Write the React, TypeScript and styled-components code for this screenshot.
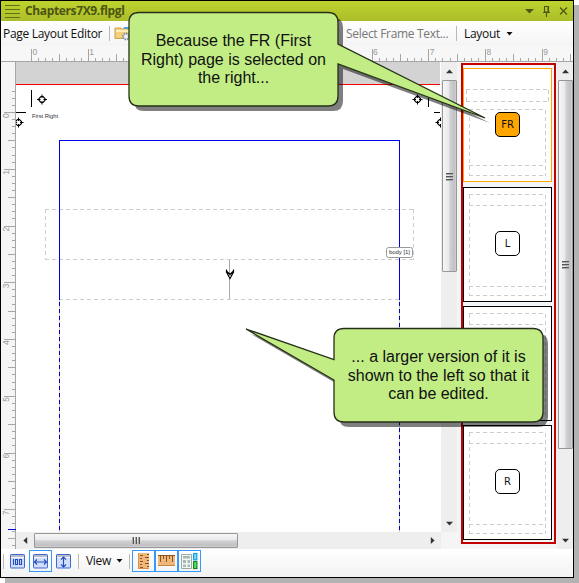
import React from "react";
import styled, { createGlobalStyle, css } from "styled-components";

const GlobalStyle = createGlobalStyle`
  * { box-sizing: border-box; }
  body { margin: 0; background: #fff; overflow: hidden; }
`;

const Stage = styled.div`
  position: relative;
  width: 579px;
  height: 583px;
  background: linear-gradient(#b2b2b2, #b2b2b2) 5px 5px / 574px 578px no-repeat #fff;
  font-family: "Open Sans", "Noto Sans", sans-serif;
`;

const Window = styled.main`
  display: flex;
  flex-direction: column;
  width: 574px;
  height: 578px;
  border: 1px solid #000;
  background: #f5f5f5;
`;

const TitleBar = styled.header`
  display: flex;
  align-items: center;
  height: 20px;
  padding: 0 5px 0 4px;
  background: linear-gradient(#bfd32f, #abbd29);
`;

const Title = styled.h1`
  flex: 1;
  margin: 0 0 0 5px;
  font-size: 12px;
  line-height: 18px;
  font-weight: 700;
  letter-spacing: -0.36px;
  color: #4c5411;
`;

const Toolbar = styled.div`
  display: flex;
  align-items: center;
  height: 25px;
  padding-left: 2px;
  background: linear-gradient(#fff, #f4f4f4);
  white-space: nowrap;
`;

const Label = styled.span<{ $width: number; $muted?: boolean }>`
  width: ${(p) => p.$width}px;
  flex: none;
  font-size: 12px;
  line-height: 16px;
  letter-spacing: -0.3px;
  color: ${(p) => (p.$muted ? "#777" : "#111")};
`;

const Separator = styled.i<{ $left: number; $right: number }>`
  flex: none;
  width: 1px;
  height: 15px;
  margin: 0 ${(p) => p.$right}px 0 ${(p) => p.$left}px;
  background: #b9b9b9;
`;

const Spacer = styled.span<{ $width: number }>`
  flex: none;
  width: ${(p) => p.$width}px;
`;

const Drawing = styled.svg`
  display: block;
  flex: none;
`;

const Body = styled.div`
  display: flex;
  height: 487px;
`;

const Editor = styled.section`
  display: grid;
  grid-template: 470px 17px / 15px 425px 16px;
  width: 456px;
`;

const RulerColumn = styled.div`
  grid-row: 1 / 3;
  background: #f5f5f5;
`;

const Pages = styled.aside`
  display: flex;
  flex-direction: column;
  gap: 4px;
  width: 95px;
  height: 481px;
  margin: 1px 1px 0 4px;
  padding: 3px 2px 0 0;
  border: 2px solid #c40000;
  background: #f2f6f8;
`;

const Page = styled.div<{ $selected?: boolean }>`
  display: grid;
  place-items: center;
  flex: none;
  width: 89px;
  height: ${(p) => (p.$selected ? 114 : 115)}px;
  margin-bottom: ${(p) => (p.$selected ? 1 : 0)}px;
  border: 1px solid ${(p) => (p.$selected ? "#ffa500" : "#000")};
  background: #fff;
  & > * { grid-area: 1 / 1; }
`;

const Badge = styled.span<{ $selected?: boolean }>`
  display: grid;
  place-items: center;
  width: 25px;
  height: 25px;
  margin-bottom: ${(p) => (p.$selected ? 1 : 2)}px;
  border: 1px solid #000;
  border-radius: 5px;
  background: ${(p) => (p.$selected ? "#ffa500" : "#fff")};
  font: 10px "DejaVu Sans", sans-serif;
  color: #111;
`;

const Track = styled.div<{ $vertical?: boolean }>`
  display: flex;
  flex-direction: ${(p) => (p.$vertical ? "column" : "row")};
  align-items: center;
  width: ${(p) => (p.$vertical ? "16px" : "auto")};
  height: ${(p) => (p.$vertical ? "auto" : "17px")};
  background: #eee;
`;

const ArrowCell = styled.span<{ $vertical?: boolean }>`
  display: grid;
  place-items: center;
  flex: none;
  ${(p) => (p.$vertical ? css`width: 16px; height: 18px;` : css`width: 18px; height: 15px;`)}
`;

const Thumb = styled.span<{ $length: number; $vertical?: boolean }>`
  display: grid;
  place-items: center;
  flex: none;
  border: 1px solid #979797;
  border-radius: 1px;
  ${(p) =>
    p.$vertical
      ? css`
          width: 15px;
          height: ${p.$length}px;
          background: linear-gradient(90deg, #f6f6f6, #e9e9eb 46%, #d2d2d5 52%, #c0c0c4 90%, #d8d8da);
        `
      : css`
          height: 15px;
          width: ${p.$length}px;
          background: linear-gradient(#f6f6f6, #e9e9eb 46%, #d2d2d5 52%, #c0c0c4 90%, #d8d8da);
        `}
`;

const Push = styled.span`
  flex: 1;
`;

const StatusBar = styled.footer`
  display: flex;
  align-items: center;
  height: 28px;
  padding: 0 0 4px 2px;
  background: linear-gradient(#fff, #f2f2f2);
`;

const ToolButton = styled.span<{ $active?: boolean }>`
  display: grid;
  place-items: center;
  flex: none;
  width: 23px;
  height: 22px;
  border: 1px solid ${(p) => (p.$active ? "#3399ff" : "transparent")};
`;

const Overlay = styled.svg`
  position: absolute;
  inset: 0;
`;

const Note = styled.p<{ $x: number; $y: number }>`
  position: absolute;
  left: ${(p) => p.$x}px;
  top: ${(p) => p.$y}px;
  width: 209px;
  margin: 0;
  text-align: center;
  white-space: pre-line;
  font: 16px/18.5px "Liberation Sans", Arial, sans-serif;
  color: #111;
`;

const INCH = 56.75;

function HorizontalRuler() {
  const ticks = Array.from({ length: 77 }, (_, i) => i);
  const numbers = [0, 1, 6, 7, 8, 9];
  return (
    <Drawing width="572" height="16" shapeRendering="crispEdges">
      <rect width="572" height="16" fill="#f7f7f7" />
      {ticks.map((i) => {
        const h = i % 8 === 0 ? 12 : i % 4 === 0 ? 7 : 3;
        return <rect key={i} x={Math.round(30 + (i * INCH) / 8)} y={15 - h} width="1" height={h} fill="#a6a6a6" />;
      })}
      <rect y="15" width="572" height="1" fill="#a6a6a6" />
      {numbers.map((n) => (
        <text key={n} x={31.5 + n * INCH} y="9" fontFamily="Liberation Sans" fontSize="8.5" fill="#999">{n}</text>
      ))}
    </Drawing>
  );
}

function VerticalRuler() {
  const ticks = Array.from({ length: 67 }, (_, i) => i - 5);
  return (
    <Drawing width="15" height="487" shapeRendering="crispEdges">
      {ticks.map((i) => {
        const w = i % 8 === 0 ? 11 : i % 4 === 0 ? 7 : 3;
        const y = Math.round(50 + (i * INCH) / 8);
        return y > 22 && y < 487 ? <rect key={i} x={14 - w} y={y} width={w} height="1" fill="#a6a6a6" /> : null;
      })}
      <rect x="14" width="1" height="487" fill="#a6a6a6" />
      <rect x="7" y="467" width="8" height="1" fill="#0000e0" />
      {Array.from({ length: 8 }, (_, n) => (
        <text key={n} transform={`translate(8 ${56 + n * INCH}) rotate(-90)`} fontFamily="Liberation Sans" fontSize="8.5" fill="#999">{n}</text>
      ))}
    </Drawing>
  );
}

function Register({ x, y }: { x: number; y: number }) {
  return (
    <g transform={`translate(${x} ${y})`} fill="none" stroke="#000">
      <path d="M-1 -3H1L3 -1V1L1 3H-1L-3 1V-1Z" strokeWidth="1.1" />
      <path d="M-5 0H-1.5M1.5 0H5M0-5V-1.5M0 1.5V5" />
    </g>
  );
}

/* The editable page: crop marks, margins and text frames. */
function PageCanvas() {
  return (
    <Drawing width="425" height="470" viewBox="16 62 425 470">
      <rect x="16" y="62" width="425" height="470" fill="#fff" />
      <g shapeRendering="crispEdges">
        <rect x="16" y="62" width="424" height="22" fill="#d3d3d3" />
        <rect x="16" y="84" width="424" height="1" fill="#f00" />
        <path d="M31.5 90V107M428.5 90V107M16 112.5H26M434 112.5H440" stroke="#000" />
        <g fill="none" stroke="#cdcdcd">
          <path d="M45.5 209V260M413.5 209V260" strokeDasharray="4 3" />
          <path d="M45 209.5H413M45 259.5H413M59 299.5H399" strokeDasharray="4 3" />
          <path d="M59.5 300V532M399.5 300V532" />
        </g>
        <path d="M59.5 300V141M59 140.5H400M399.5 140V300" fill="none" stroke="#0000f0" />
        <path d="M59.5 302V532M399.5 302V532" stroke="#0000c8" strokeDasharray="4 3" />
        <path d="M229.5 260V299" stroke="#aaa" />
      </g>
      <Register x={42} y={99.5} />
      <Register x={417.5} y={99.5} />
      <Register x={18.5} y={122.5} />
      <Register x={440.5} y={122.5} />
      <path d="M226.5 269.5V272L230 278.5L233.5 272V269.5M227 271.5L230 274.5L233 271.5" fill="none" stroke="#000" strokeWidth="1.2" />
      <path d="M229 275H231V277H229Z" fill="#999" />
      <text x="32" y="118" fontFamily="Liberation Sans" fontSize="5.8" fill="#333" textLength="26">First Right</text>
      <rect x="386.5" y="247.5" width="26" height="10" rx="2" fill="#fff" stroke="#999" />
      <text x="389" y="254.3" fontFamily="Liberation Sans" fontSize="6" fill="#333" textLength="21">body [1]</text>
    </Drawing>
  );
}

function PageThumb({ name, selected }: { name?: string; selected?: boolean }) {
  return (
    <Page $selected={selected}>
      <Drawing width="87" height="112" shapeRendering="crispEdges" fill="none" stroke="#ccc" strokeDasharray="4 3">
        {selected ? (
          <path d="M2 20.5H85M2 32.5H85M2.5 21V32M84.5 21V32M5 40.5H82M5 96.5H82M5 106.5H82M5.5 41V107M81.5 41V107" />
        ) : (
          <path d="M5 5.5H82M5 16.5H82M5 97.5H82M5 106.5H82M5.5 6V107M81.5 6V107" />
        )}
      </Drawing>
      {name && <Badge $selected={selected}>{name}</Badge>}
    </Page>
  );
}

function Arrow({ turn }: { turn: number }) {
  return (
    <Drawing width="7" height="7" viewBox="0 0 7 7">
      <path d="M0 5.2L3.5 1.4L7 5.2Z" fill="#333" transform={`rotate(${turn} 3.5 3.5)`} />
    </Drawing>
  );
}

function Grip({ turn }: { turn: number }) {
  return (
    <Drawing width="9" height="9" viewBox="0 0 9 9" shapeRendering="crispEdges">
      <g transform={`rotate(${turn} 4.5 4.5)`}>
        <path d="M1 1.5H8M1 4.5H8M1 7.5H8" stroke="#555" />
        <path d="M1 2.5H8M1 5.5H8M1 8.5H8" stroke="#aaa" />
      </g>
    </Drawing>
  );
}

function Scroll({ vertical, length }: { vertical?: boolean; length: number }) {
  return (
    <Track $vertical={vertical}>
      <ArrowCell $vertical={vertical}><Arrow turn={vertical ? 0 : -90} /></ArrowCell>
      <Thumb $vertical={vertical} $length={length}><Grip turn={vertical ? 0 : 90} /></Thumb>
      <Push />
      <ArrowCell $vertical={vertical}><Arrow turn={vertical ? 180 : 90} /></ArrowCell>
    </Track>
  );
}

function Caret() {
  return <Drawing width="7" height="4"><path d="M.5 0H6.5L3.5 3.5Z" fill="#111" /></Drawing>;
}

function ZoomIcon({ kind }: { kind: "full" | "width" | "height" }) {
  return (
    <Drawing width="15" height="15" viewBox="0 0 15 15">
      <rect x=".5" y=".5" width="14" height="13.5" rx=".7" fill="#cfdefa" stroke="#3f67cf" />
      <path d="M1 1H14V3H1Z" fill="#b9bdc9" />
      <path d="M1 3.5H14" stroke="#f4f7ff" />
      <g fill="none" stroke="#2448bd" strokeWidth="1.1">
        {kind === "full" && <path d="M3.5 5V11M5.5 5.5H7.5V10.5H5.5ZM9.5 5.5H11.5V10.5H9.5Z" />}
        {kind === "width" && <path d="M1.5 8H13.5M4 5.5L1.5 8L4 10.5M11 5.5L13.5 8L11 10.5" />}
        {kind === "height" && <path d="M7.5 3V13M5 5.5L7.5 3L10 5.5M5 10.5L7.5 13L10 10.5" />}
      </g>
    </Drawing>
  );
}

function RulerIcon({ vertical }: { vertical?: boolean }) {
  return (
    <Drawing width="17" height="16" viewBox="0 0 17 16" shapeRendering="crispEdges">
      {vertical ? (
        <>
          <rect x="3" y="0" width="11" height="16" fill="#f0b77a" />
          <path d="M3 15.5H14M3.5 0V16" stroke="#d3924f" />
          <path d="M5 2.5H8M5 5.5H7M5 8.5H8M5 11.5H7M5 14.5H8M12 1.5H14M10 4.5H14M12 7.5H14M10 10.5H14M12 13.5H14" stroke="#8d531e" />
        </>
      ) : (
        <>
          <rect x="0" y="2" width="17" height="11" fill="#f0b77a" />
          <path d="M0 12.5H17" stroke="#c58442" />
          <path d="M0 2.5H17M2.5 3V9M5.5 3V6M8.5 3V9M11.5 3V6M14.5 3V9" stroke="#8d531e" />
        </>
      )}
    </Drawing>
  );
}

function FramesIcon() {
  return (
    <Drawing width="17" height="17" viewBox="0 0 17 17">
      <path d="M.5 1.5H10.5V15.5H.5Z" fill="#f2f7f5" stroke="#9aaba7" />
      <path d="M2 3H9V5.5H2ZM2 7H5V10H2ZM6.5 7H9V10H6.5ZM2 11.5H5V14H2ZM6.5 11.5H9V14H6.5Z" fill="#a5b8b3" />
      <rect x="12.6" y=".6" width="3.3" height="6.3" fill="#75d5ff" stroke="#0099e0" />
      <rect x="12.6" y="8.6" width="3.3" height="7" fill="#4de05d" stroke="#07771a" />
    </Drawing>
  );
}

function FolderIcon() {
  return (
    <Drawing width="20" height="17" viewBox="0 0 20 17">
      <path d="M1 3.5V13.5H17V2.5H10L8.5 4.5L7 3H1Z" fill="#f5cf79" stroke="#caa04b" />
      <path d="M10 3H16" stroke="#4ba3df" strokeWidth="2" />
      <path d="M2 6H16" stroke="#ffedb9" strokeWidth="2" />
      <circle cx="12" cy="11.5" r="3" fill="#eee" stroke="#8193a2" strokeWidth="2" strokeDasharray="1.5 .8" />
    </Drawing>
  );
}

interface CalloutProps {
  x: number;
  y: number;
  outline: string;
  children: string;
}

function Callout({ x, y, outline, children }: CalloutProps) {
  return (
    <>
      <Overlay width="579" height="583">
        <path d={outline} transform="translate(5 5)" fill="#000" opacity=".5" />
        <path d={outline} fill="#c2ed85" stroke="#263018" strokeWidth="1.3" />
      </Overlay>
      <Note $x={x} $y={y}>{children}</Note>
    </>
  );
}

export default function App() {
  return (
    <Stage>
      <GlobalStyle />
      <Window>
        <TitleBar>
          <Drawing width="15" height="14" shapeRendering="crispEdges">
            <path d="M0 1.5H15M0 5.5H15M0 9.5H15M0 13.5H15" stroke="#646e16" />
          </Drawing>
          <Title>Chapters7X9.flpgl</Title>
          <Drawing width="44" height="12" viewBox="0 0 44 12">
            <path d="M1 4H10L5.5 8.5Z" fill="#4d5613" />
            <path d="M20.5 1.5H24.5V7H20.5ZM19 7.5H26M22.5 7V12M24 1V7" fill="none" stroke="#4d5613" strokeWidth="1.1" />
            <path d="M36 2.5L43 9.5M43 2.5L36 9.5" stroke="#4d5613" strokeWidth="1.3" />
          </Drawing>
        </TitleBar>
        <Toolbar>
          <Label $width={99}>Page Layout Editor</Label>
          <Separator $left={7} $right={4} />
          <FolderIcon />
          <Spacer $width={212} />
          <Label $width={102} $muted>Select Frame Text...</Label>
          <Separator $left={8} $right={7} />
          <Label $width={42}>Layout</Label>
          <Caret />
        </Toolbar>
        <HorizontalRuler />
        <Body>
          <Editor>
            <RulerColumn><VerticalRuler /></RulerColumn>
            <PageCanvas />
            <Scroll vertical length={192} />
            <Scroll length={204} />
          </Editor>
          <Pages>
            <PageThumb name="FR" selected />
            <PageThumb name="L" />
            <PageThumb />
            <PageThumb name="R" />
          </Pages>
          <Scroll vertical length={369} />
        </Body>
        <StatusBar>
          <Separator $left={0} $right={2} />
          <ToolButton><ZoomIcon kind="full" /></ToolButton>
          <ToolButton $active><ZoomIcon kind="width" /></ToolButton>
          <ToolButton><ZoomIcon kind="height" /></ToolButton>
          <Separator $left={3} $right={7} />
          <Label $width={30}>View</Label>
          <Caret />
          <Separator $left={6} $right={2} />
          <ToolButton $active><RulerIcon vertical /></ToolButton>
          <ToolButton $active><RulerIcon /></ToolButton>
          <ToolButton $active><FramesIcon /></ToolButton>
        </StatusBar>
      </Window>
      <Callout
        x={129}
        y={32}
        outline="M139 12.5H328Q338 12.5 338 22.5V44L485 118L338 64V96Q338 106 328 106H139Q129 106 129 96V22.5Q129 12.5 139 12.5Z"
      >{"Because the FR (First\nRight) page is selected on\nthe right..."}</Callout>
      <Callout
        x={334}
        y={348}
        outline="M344 328.5H533Q543 328.5 543 338.5V412Q543 422 533 422H344Q334 422 334 412V380L246 329L334 359.5V338.5Q334 328.5 344 328.5Z"
      >{"... a larger version of it is\nshown to the left so that it\ncan be edited."}</Callout>
    </Stage>
  );
}
